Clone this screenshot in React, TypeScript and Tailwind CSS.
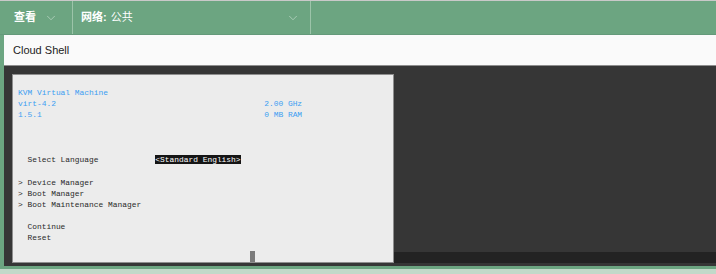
import { ChevronDown } from 'lucide-react'

const mono = { fontFamily: '"Liberation Mono", "DejaVu Sans Mono", monospace' }

const lines: { text: string; blue?: boolean; sel?: boolean }[] = [
  { text: 'KVM Virtual Machine', blue: true },
  { text: 'virt-4.2                                            2.00 GHz', blue: true },
  { text: '1.5.1                                               0 MB RAM', blue: true },
  { text: '' },
  { text: '' },
  { text: '' },
  { text: '  Select Language            ', sel: true },
  { text: '' },
  { text: '> Device Manager' },
  { text: '> Boot Manager' },
  { text: '> Boot Maintenance Manager' },
  { text: '' },
  { text: '  Continue' },
  { text: '  Reset' },
]

export default function App() {
  return (
    <div
      className="w-[716px] h-[274px] overflow-hidden flex flex-col bg-[#6ca581] border-t border-[#c9c9c9]"
      style={{ fontFamily: '"Liberation Sans", Arial, "Noto Sans CJK SC", sans-serif' }}
    >
      {/* header */}
      <div className="h-[34px] flex shrink-0 text-white text-[11px] border-b border-[#64997a]">
        <div className="w-[73px] flex items-center pl-[14px] border-r border-[#9cc4a9]">
          <span className="font-bold">查看</span>
          <ChevronDown className="ml-[8px] text-[#d3e6d9]" size={14} strokeWidth={1} />
        </div>
        <div className="w-[238px] flex items-center pl-[8px] pr-[10px] border-r border-[#9cc4a9]">
          <span className="font-bold">网络:</span>
          <span className="ml-[4px]">公共</span>
          <ChevronDown className="ml-auto text-[#d3e6d9]" size={14} strokeWidth={1} />
        </div>
        <div className="flex-1" />
      </div>

      <div className="ml-[4px] flex flex-col">
        <div className="h-[31px] flex items-center px-[9px] pt-[1px] bg-[#fafafa] border-b border-[#8d8d8d] text-[11px] text-[#222]">
          Cloud Shell
        </div>

        {/* shell */}
        <div className="h-[200px] flex bg-[#363636] pl-[8px] pt-[8px]">
          <div className="relative w-[382px] h-[189px] bg-[#ececec] border border-[#8e8e8e] pl-[5px] pt-[11px] text-[7.9px] leading-[11.15px] text-[#2a2a2a]" style={mono}>
            {lines.map((l, i) => (
              <div key={i} className={`h-[11.15px] whitespace-pre ${l.blue ? 'text-[#3c9ef2] pt-[1px]' : 'pt-[1.5px]'}`}>
                {l.text}
                {l.sel && <span className="bg-[#151515] text-white">{'<Standard English>'}</span>}
              </div>
            ))}
            <div className="absolute left-[237px] bottom-0 w-[5px] h-[11px] bg-[#7b7b7b]" />
          </div>
          <div className="flex-1 flex flex-col justify-end pb-[3px]">
            <div className="h-[11px] bg-[#232323]" />
          </div>
        </div>
      </div>

      <div className="h-[3px] bg-[#6ca581]" />
      <div className="flex-1 bg-[#c2d9c9]" />
    </div>
  )
}
